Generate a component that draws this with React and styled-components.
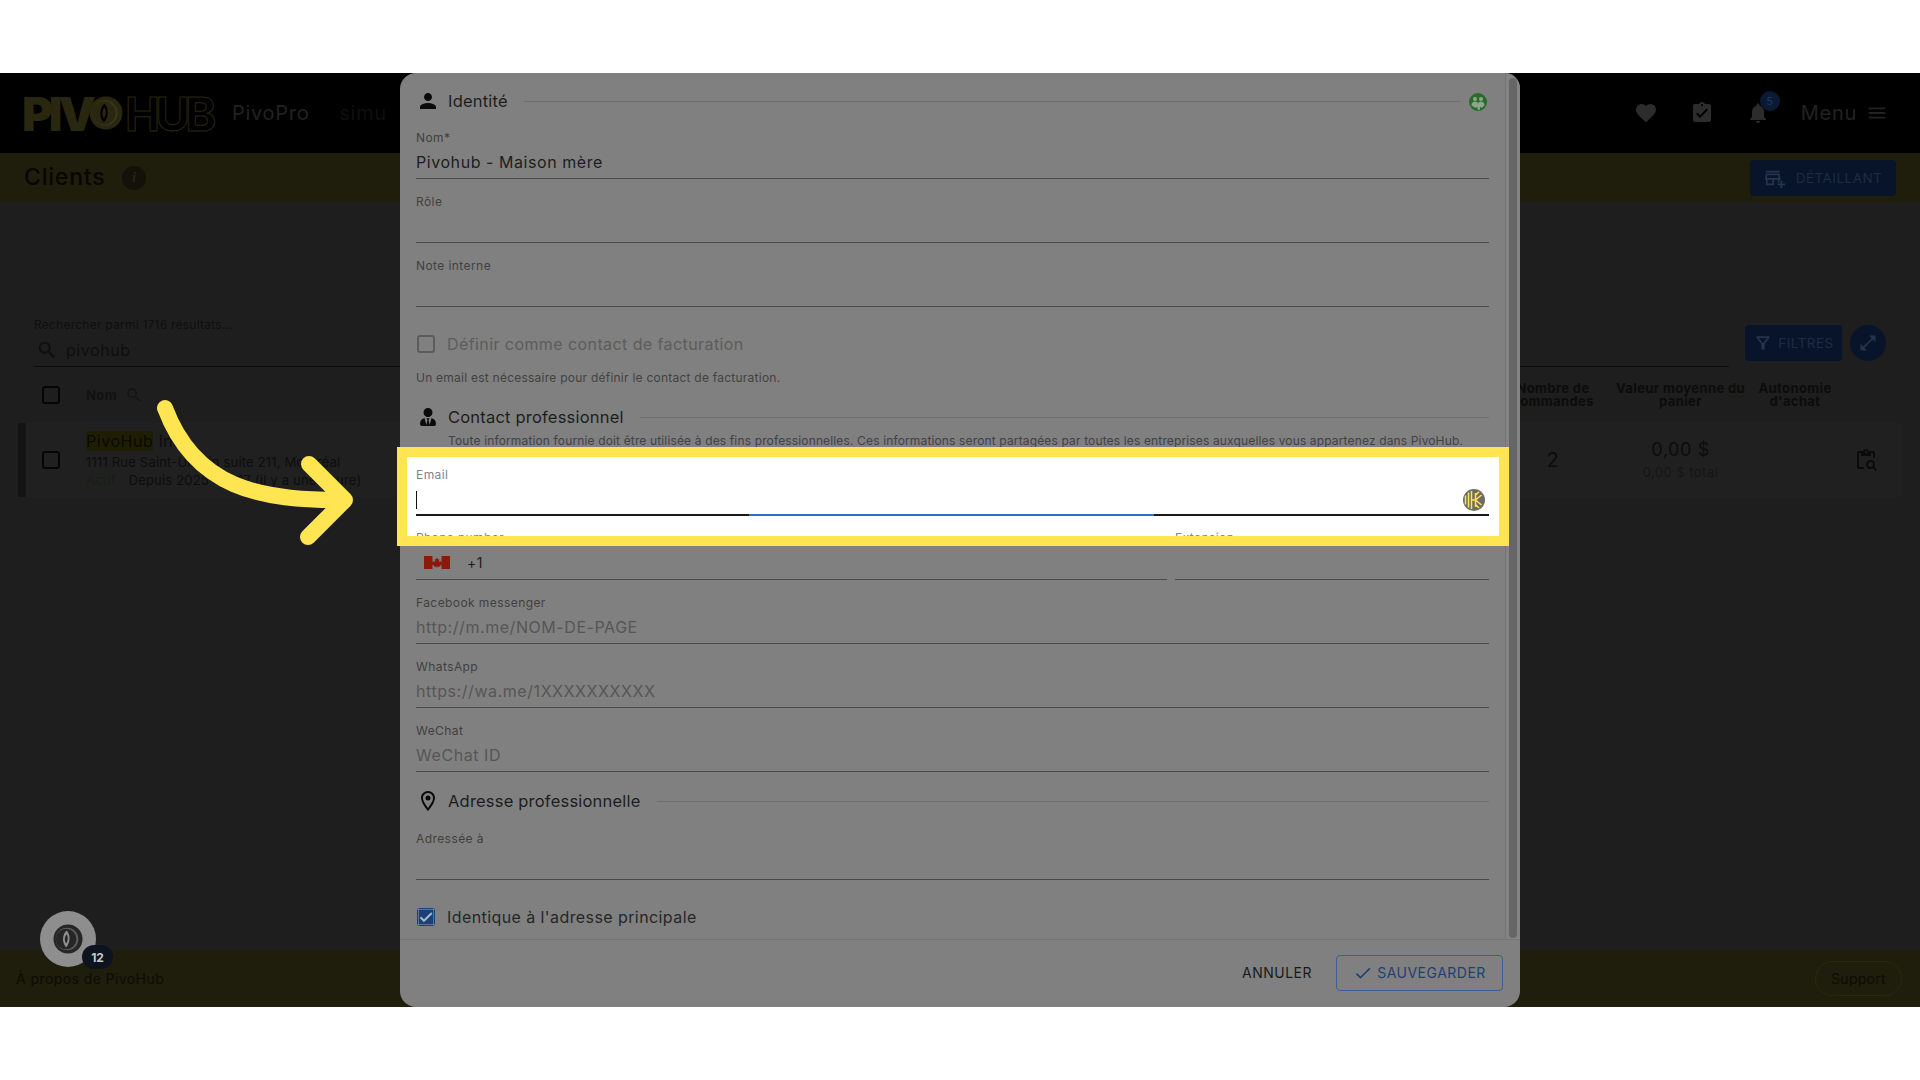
import React from "react";
import styled, { createGlobalStyle } from "styled-components";
import { MdPerson, MdFavorite, MdAssignmentTurnedIn, MdNotifications, MdMenu, MdOutlineAddBusiness, MdSearch, MdOutlineFilterAlt, MdOpenInFull, MdOutlineLocationOn, MdCheck, MdOutlineContentPasteSearch } from "react-icons/md";
import { FaUserTie } from "react-icons/fa";

const Global = createGlobalStyle`
  html, body { margin: 0; padding: 0; background: #fff; }
  * { box-sizing: border-box; letter-spacing: 0.035em; }
  body { font-family: Inter, "Noto Sans", "Liberation Sans", sans-serif; }
`;

const Page = styled.div`
  width: 1920px; height: 1080px; padding-top: 73px; overflow: hidden; background: #fff;
`;
const Stage = styled.div`
  position: relative; width: 1920px; height: 934px; display: flex; flex-direction: column; background: #1e1e1e;
`;
const Header = styled.header`
  height: 80px; background: #000; display: flex; align-items: center; padding: 0 32px 0 22px;
`;
const Logo = styled.div`
  display: flex; align-items: center; width: 210px; height: 44px;
`;
const LogoSolid = styled.span`
  font-size: 47px; font-weight: 900; letter-spacing: -4px; color: #2a2710; line-height: 1; margin-right: -3px;
`;
const LogoOutline = styled.span`
  font-size: 47px; font-weight: 700; letter-spacing: -4.6px; color: transparent; -webkit-text-stroke: 1px #2a2710; line-height: 1; margin-left: 2px;
`;
const NavText = styled.span`
  font-size: 20px; color: ${p => p.$dim ? "#0f0f0f" : "#222"}; margin-right: ${p => p.$mr || 0}px;
`;
const HeaderRight = styled.div`
  margin-left: auto; display: flex; align-items: center; gap: 32px; color: #2c2c2c; font-size: 24px;
`;
const Bell = styled.span`
  position: relative; display: flex;
`;
const BellBadge = styled.span`
  position: absolute; left: 14px; top: -10px; width: 20px; height: 20px; border-radius: 50%; background: #0a1a33; color: #21385a;
  font-size: 11px; display: flex; align-items: center; justify-content: center;
`;
const MenuWrap = styled.span`
  display: flex; align-items: center; gap: 9px; font-size: 20px; color: #222; margin-left: -1px;
`;
const SubHeader = styled.div`
  height: 49px; background: #1f1d0c; display: flex; align-items: center; padding: 0 24px;
`;
const PageTitle = styled.h1`
  margin: 0 0 2px; font-size: 23px; font-weight: 500; color: #060604;
`;
const InfoDot = styled.span`
  width: 24px; height: 24px; border-radius: 50%; background: #131208; color: #24221a; margin-left: 17px;
  font: italic 700 15px "Liberation Serif", serif; display: flex; align-items: center; justify-content: center;
`;
const DarkButton = styled.button`
  border: 0; border-radius: 4px; background: #07142a; color: #1d2c44; height: 36px; width: ${p => p.$w}px; font-family: inherit; font-size: 13.5px;
  display: flex; align-items: center; justify-content: center; gap: ${p => p.$gap}px; padding: 0; flex: none; margin-left: ${p => p.$auto ? "auto" : 0}; margin-top: ${p => p.$mt || 0}px;
  svg { font-size: ${p => p.$icon}px; color: #24344e; }
`;
const Main = styled.main`
  flex: 1; padding: 115px 17px 0 18px; display: flex; flex-direction: column;
`;
const Toolbar = styled.div`
  display: flex; align-items: flex-start; gap: 8px; margin-left: 16px; height: 50px;
`;
const SearchField = styled.div`
  width: 1695px; flex: none; height: 50px; border-bottom: 1px solid #0c0c0c; margin-right: 8px; color: #0e0e0e;
`;
const SearchHint = styled.div`
  font-size: 12px; line-height: 16px; letter-spacing: 0.02em;
`;
const SearchInput = styled.div`
  display: flex; align-items: center; gap: 8px; height: 33px; font-size: 16px; padding-left: 2px; svg { font-size: 22px; }
`;
const RoundButton = styled.span`
  width: 36px; height: 36px; flex: none; margin-top: 8px; border-radius: 50%; background: #07142a; color: #24344e; display: flex; align-items: center; justify-content: center; font-size: 20px;
`;
const Columns = `
  display: grid; grid-template-columns: 60px 1fr 126px 129px 100px 42px; padding-right: 16px; align-items: center; color: #0c0c0c;
`;
const TableHead = styled.div`
  ${Columns}
  height: 34px; margin-top: 11px; padding-left: 8px; font-size: 13px; font-weight: 700; line-height: 13px; text-align: center;
`;
const HeadText = styled.span`
  letter-spacing: 0.03em; white-space: nowrap; display: block;
`;
const NameHead = styled.span`
  display: flex; align-items: center; gap: 8px; color: #111; font-size: 13px; svg { font-size: 18px; color: #141414; }
`;
const Box = styled.span`
  display: block; width: 18px; height: 18px; margin-left: 16px; border: 2px solid #050505; border-radius: 3px;
`;
const Row = styled.div`
  ${Columns}
  height: 74px; margin-top: 11px; background: #202020; border-left: 8px solid #141414; border-radius: 2px;
`;
const NameCell = styled.div`
  display: flex; flex-direction: column; align-self: start; padding-top: 8px; color: #0d0d0d;
`;
const NameLine = styled.div`
  font-size: 16px; line-height: 20px;
`;
const Mark = styled.mark`
  background: #1f1e05; color: #0a0a00;
`;
const AddressLine = styled.div`
  font-size: 13px; line-height: 23px; letter-spacing: 0.015em;
`;
const StatusLine = styled.div`
  font-size: 13px; line-height: 13px; display: flex; gap: 13px; span { letter-spacing: 0.015em; }
`;
const Actif = styled.span`
  color: #12220f;
`;
const CountCell = styled.div`
  font-size: 20px; text-align: center;
`;
const AvgCell = styled.div`
  text-align: center; font-size: 18px; line-height: 24px; small { display: block; font-size: 13px; line-height: 20px; color: #151515; }
`;
const ActionCell = styled.div`
  font-size: 24px; display: flex; justify-content: center; color: #0b0b0b;
`;
const Footer = styled.footer`
  height: 57px; background: #1f1d0c; display: flex; align-items: center; justify-content: space-between; padding: 0 18px 0 16px; color: #0d0c05; font-size: 14px;
  > span:first-child { letter-spacing: 0.03em; }
`;
const Support = styled.span`
  height: 35px; width: 87px; border: 1px solid #2a2810; border-radius: 18px; display: flex; align-items: center; justify-content: center; font-size: 14px; letter-spacing: 0.02em;
`;
const Modal = styled.div`
  position: absolute; left: 400px; top: 0; width: 1120px; height: 934px; background: #808080; border-radius: 16px; display: flex; flex-direction: column;
`;
const ModalBody = styled.div`
  flex: 1; display: flex; min-height: 0;
`;
const Form = styled.div`
  flex: 1; min-width: 0; padding: 13px 16px 0; position: relative;
`;
const Scroll = styled.div`
  width: 15px; flex: none; background: #848484; border-left: 1px solid #757575; border-top-right-radius: 16px; padding: 5px 2px 1px 3px;
`;
const Thumb = styled.div`
  height: 100%; width: 8px; background: #666; border-radius: 4px;
`;
const Section = styled.div`
  height: 30px; display: flex; align-items: center; color: #1d1d1d; font-size: 16.5px; letter-spacing: 0.012em; margin: ${p => p.$mt ?? 0}px 0 ${p => p.$mb ?? 14}px;
  > svg:first-child { width: 24px; height: 24px; margin-right: 8px; flex: none; color: #0a0a0a; }
`;
const Line = styled.span`
  flex: 1; height: 1px; background: #6d6d6d; margin-left: 16px;
`;
const Field = styled.div`
  height: 50px; padding-top: 1px; border-bottom: ${p => p.$focus ? "2px solid #1a1a1a" : "1px solid #4a4a4a"}; margin-bottom: 14px; position: relative;
`;
const Label = styled.div`
  font-size: 12px; line-height: 16px; color: ${p => p.$light ? "#7c8590" : "#404040"}; letter-spacing: 0.035em;
`;
const Value = styled.div`
  font-size: 16px; line-height: 33px; height: 33px; color: ${p => p.$ph ? "#565656" : "#1d1d1d"}; display: flex; align-items: center;
`;
const CheckRow = styled.div`
  height: 24px; margin-top: 25px; display: flex; align-items: center; gap: 12px; font-size: 16px; letter-spacing: 0.026em; color: ${p => p.$off ? "#5c5c5c" : "#262626"}; padding-left: 1px;
`;
const EmptyBox = styled.span`
  width: 18px; height: 18px; border: 2px solid #5c5c5c; border-radius: 3px;
`;
const CheckedBox = styled.span`
  width: 18px; height: 18px; border-radius: 3px; background: #1b4079; color: #b4bfd0; display: flex; align-items: center; justify-content: center; font-size: 16px;
`;
const Help = styled.div`
  font-size: 12px; line-height: 16px; color: #424242; margin-top: ${p => p.$mt || 0}px; padding-left: ${p => p.$pl || 0}px; white-space: nowrap; letter-spacing: ${p => p.$ls || "0.02em"};
`;
const Spotlight = styled.div`
  position: relative; z-index: 2; margin: -2px -20px 0 -19px; height: 99px; border: 10px solid #ffe552; background: #fff; padding: 9px 10px 0 9px; overflow: hidden;
`;
const FocusSegment = styled.span`
  position: absolute; left: 333px; width: 405px; bottom: -2px; height: 2px; background: #2f6fc8;
`;
const Caret = styled.span`
  display: block; width: 1px; height: 18px; background: #111;
`;
const Keeper = styled.svg`
  position: absolute; right: 4px; top: 23px; width: 22px; height: 22px;
`;
const SplitLabels = styled.div`
  display: grid; grid-template-columns: 751px 1fr; column-gap: 8px;
`;
const PhoneRow = styled.div`
  display: grid; grid-template-columns: 751px 1fr; column-gap: 8px; margin-bottom: 14px;
`;
const PhoneCell = styled.div`
  height: 34px; border-bottom: 1px solid #4a4a4a; display: flex; align-items: center; gap: 17px; padding-left: 8px; font-size: 14px; color: #1d1d1d;
`;
const ModalFoot = styled.div`
  height: 68px; border-top: 1px solid #767676; display: flex; align-items: center; justify-content: flex-end; padding: 0 17px 2px 0; gap: 24px;
`;
const Cancel = styled.button`
  border: 0; background: none; font-family: inherit; font-size: 14px; color: #1a1a1a; padding: 0;
`;
const Save = styled.button`
  width: 167px; height: 36px; border: 1px solid #3c5f96; border-radius: 4px; background: none; color: #1e3f74; font-family: inherit; font-size: 14px;
  display: flex; align-items: center; justify-content: center; gap: 4px; svg { font-size: 20px; }
`;
const Bubble = styled.div`
  position: absolute; left: 40px; top: 838px; width: 56px; height: 56px; border-radius: 50%; background: #8e8e8e; display: flex; align-items: center; justify-content: center;
`;
const BubbleCount = styled.span`
  position: absolute; left: 42px; top: 34px; width: 31px; height: 24px; border-radius: 12px; background: #0e1320; color: #c9c9c9;
  font-size: 12px; font-weight: 700; display: flex; align-items: center; justify-content: center; letter-spacing: 0;
`;
const Arrow = styled.svg`
  position: absolute; left: 0; top: 0; width: 400px; height: 560px; z-index: 3; pointer-events: none;
`;
const GreenIcon = styled.svg`
  width: 18px; height: 18px; margin: 1px 2px 0 9px; flex: none;
`;

const Swirl = ({ size, fg, ring, hole }) => (
  <svg width={size} height={size} viewBox="0 0 32 32">
    <circle cx="16" cy="16" r="15.500" fill={fg} />
    <circle cx="15" cy="16" r="12" fill={ring} />
    <circle cx="14" cy="16" r="11" fill={fg} />
    <path d="M14.500 7 C9.500 11.500 9.500 20.500 14 25 C18.500 20.500 19 11.500 14.500 7Z" fill={hole} />
    <path d="M14.500 11 C12 14 12 18 14 21 C16 18 16.500 14 14.500 11Z" fill={fg} />
  </svg>
);

const Flag = () => (
  <svg width="26" height="13" viewBox="0 0 26 13">
    <rect x="0" width="8.500" height="13" fill="#8b1a0b" />
    <rect x="17.500" width="8.500" height="13" fill="#8b1a0b" />
    <path d="M13 1.500l1.200 2 1.200-.5-.5 3 1.600-1 .4 1 1.600-.2-.6 1.700.6.5-2.800 2-.3 1-2.100-.4V12h-.6v-1.400l-2.100.4-.3-1-2.800-2 .6-.5-.6-1.700 1.600.2.4-1 1.600 1-.5-3 1.200.5z" fill="#8b1a0b" />
  </svg>
);

export default function App() {
  return (
    <Page>
      <Global />
      <Stage>
        <Header>
          <Logo>
            <LogoSolid>PIV</LogoSolid>
            <Swirl size={34} fg="#2a2710" ring="#3a3618" hole="#000" />
            <LogoOutline>HUB</LogoOutline>
          </Logo>
          <NavText $mr={30}>PivoPro</NavText>
          <NavText $dim>simu</NavText>
          <HeaderRight>
            <MdFavorite />
            <MdAssignmentTurnedIn />
            <Bell><MdNotifications /><BellBadge>5</BellBadge></Bell>
            <MenuWrap>Menu <MdMenu size={22} /></MenuWrap>
          </HeaderRight>
        </Header>
        <SubHeader>
          <PageTitle>Clients</PageTitle>
          <InfoDot>i</InfoDot>
          <DarkButton $auto $w={146} $gap={10} $icon={22}><MdOutlineAddBusiness />DÉTAILLANT</DarkButton>
        </SubHeader>
        <Main>
          <Toolbar>
            <SearchField>
              <SearchHint>Rechercher parmi 1716 résultats...</SearchHint>
              <SearchInput><MdSearch />pivohub</SearchInput>
            </SearchField>
            <DarkButton $mt={8} $w={97} $gap={5} $icon={20}><MdOutlineFilterAlt />FILTRES</DarkButton>
            <RoundButton><MdOpenInFull /></RoundButton>
          </Toolbar>
          <TableHead>
            <Box />
            <NameHead>Nom <MdSearch /></NameHead>
            <div><HeadText>Nombre de</HeadText><HeadText>commandes</HeadText></div>
            <div><HeadText>Valeur moyenne du</HeadText><HeadText>panier</HeadText></div>
            <div><HeadText>Autonomie</HeadText><HeadText>d'achat</HeadText></div>
            <span />
          </TableHead>
          <Row>
            <Box />
            <NameCell>
              <NameLine><Mark>PivoHub</Mark> Inc.</NameLine>
              <AddressLine>1111 Rue Saint-Urbain suite 211, Montréal</AddressLine>
              <StatusLine><Actif>Actif</Actif><span>Depuis 2025-06-17 (il y a une heure)</span></StatusLine>
            </NameCell>
            <CountCell>2</CountCell>
            <AvgCell>0,00 $<small>0,00 $ total</small></AvgCell>
            <span />
            <ActionCell><MdOutlineContentPasteSearch /></ActionCell>
          </Row>
        </Main>
        <Footer>
          <span>À propos de PivoHub</span>
          <Support>Support</Support>
        </Footer>

        <Bubble>
          <Swirl size={30} fg="#262626" ring="#5e5e5e" hole="#8e8e8e" />
          <BubbleCount>12</BubbleCount>
        </Bubble>

        <Modal>
          <ModalBody>
            <Form>
              <Section $mb={13}>
                <MdPerson />
                Identité
                <Line />
                <GreenIcon viewBox="0 0 18 18">
                  <circle cx="9" cy="9" r="9" fill="#2a6a2a" />
                  <circle cx="6" cy="6" r="2" fill="#8aa88a" />
                  <circle cx="12" cy="6" r="2" fill="#8aa88a" />
                  <path d="M2.500 12.500c0-3 2-4 3.500-4s2.500.8 3 2c.5-1.200 1.500-2 3-2s3.500 1 3.500 4l-3 2.500-1-1.500-1 3.500h-1.500l-1-3.500-1 1.500z" fill="#8aa88a" />
                </GreenIcon>
              </Section>
              <Field><Label>Nom*</Label><Value>Pivohub - Maison mère</Value></Field>
              <Field><Label>Rôle</Label></Field>
              <Field><Label>Note interne</Label></Field>
              <CheckRow $off><EmptyBox />Définir comme contact de facturation</CheckRow>
              <Help $mt={14}>Un email est nécessaire pour définir le contact de facturation.</Help>
              <Section $mb={1} $mt={16}>
                <FaUserTie style={{ padding: 3 }} />
                Contact professionnel
                <Line />
              </Section>
              <Help $pl={32} $ls="0.012em">Toute information fournie doit être utilisée à des fins professionnelles. Ces informations seront partagées par toutes les entreprises auxquelles vous appartenez dans PivoHub.</Help>
              <Spotlight>
                <Field $focus>
                  <Label $light>Email</Label>
                  <Value><Caret /></Value>
                  <FocusSegment />
                  <Keeper viewBox="0 0 22 22">
                    <circle cx="11" cy="11" r="11" fill="#6e6c63" />
                    <g fill="none" stroke="#ffe552" strokeWidth="1.500">
                      <path d="M2.500 6.500v9M5.500 3.500v15M8.500 2v18" />
                      <path d="M8.500 11h4M12.500 4v14M12.500 11l6-5M12.500 11l6 5M16 2.800l-3 3M16 19l-3-3" />
                    </g>
                  </Keeper>
                </Field>
                <SplitLabels><Label $light>Phone number</Label><Label $light>Extension</Label></SplitLabels>
              </Spotlight>
              <PhoneRow>
                <PhoneCell><Flag />+1</PhoneCell>
                <PhoneCell />
              </PhoneRow>
              <Field><Label>Facebook messenger</Label><Value $ph>http://m.me/NOM-DE-PAGE</Value></Field>
              <Field><Label>WhatsApp</Label><Value $ph>https://wa.me/1XXXXXXXXXX</Value></Field>
              <Field><Label>WeChat</Label><Value $ph>WeChat ID</Value></Field>
              <Section>
                <MdOutlineLocationOn />
                Adresse professionnelle
                <Line />
              </Section>
              <Field><Label>Adressée à</Label></Field>
              <CheckRow><CheckedBox><MdCheck strokeWidth={1.2} /></CheckedBox>Identique à l'adresse principale</CheckRow>
            </Form>
            <Scroll><Thumb /></Scroll>
          </ModalBody>
          <ModalFoot>
            <Cancel>ANNULER</Cancel>
            <Save><MdCheck />SAUVEGARDER</Save>
          </ModalFoot>
        </Modal>

        <Arrow viewBox="0 0 400 560">
          <g fill="none" stroke="#ffe552" strokeWidth="16" strokeLinecap="round" strokeLinejoin="round">
            <path d="M165 335 C195 415 260 428 344 427" />
            <path d="M309 391 L345 427 L308 464" />
          </g>
        </Arrow>
      </Stage>
    </Page>
  );
}
